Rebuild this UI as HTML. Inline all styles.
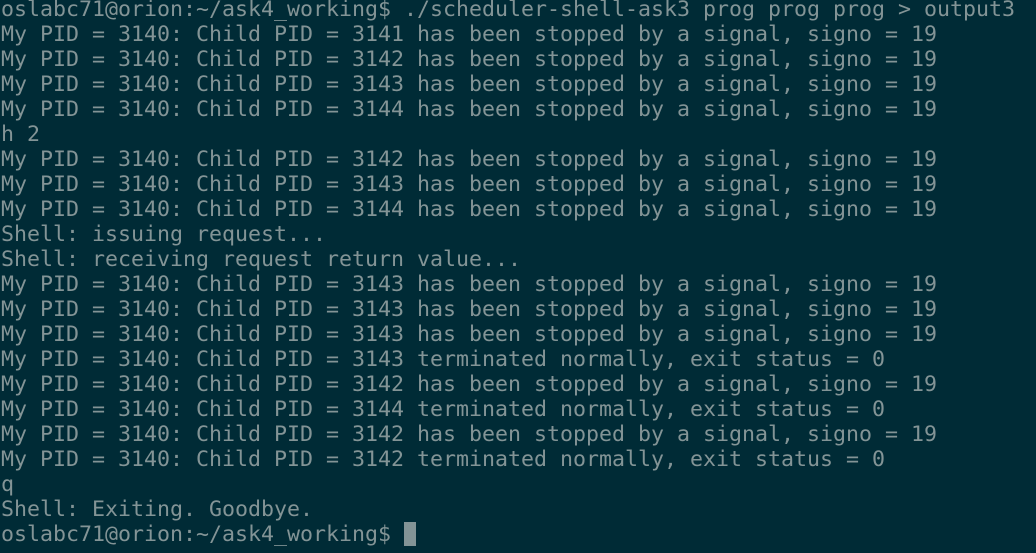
<!DOCTYPE html>
<html><head><style>
html,body{margin:0;padding:0;background:#002b36;width:1036px;height:553px;overflow:hidden}
pre{margin:0;position:absolute;left:1px;top:-3px;font-family:"DejaVu Sans Mono",monospace;font-size:21.6px;line-height:25px;color:#839496;white-space:pre}
.c{display:inline-block;width:12px;height:24px;background:#839496;vertical-align:top;margin-top:0px}
</style></head><body><pre>oslabc71@orion:~/ask4_working$ ./scheduler-shell-ask3 prog prog prog &gt; output3
My PID = 3140: Child PID = 3141 has been stopped by a signal, signo = 19
My PID = 3140: Child PID = 3142 has been stopped by a signal, signo = 19
My PID = 3140: Child PID = 3143 has been stopped by a signal, signo = 19
My PID = 3140: Child PID = 3144 has been stopped by a signal, signo = 19
h 2
My PID = 3140: Child PID = 3142 has been stopped by a signal, signo = 19
My PID = 3140: Child PID = 3143 has been stopped by a signal, signo = 19
My PID = 3140: Child PID = 3144 has been stopped by a signal, signo = 19
Shell: issuing request...
Shell: receiving request return value...
My PID = 3140: Child PID = 3143 has been stopped by a signal, signo = 19
My PID = 3140: Child PID = 3143 has been stopped by a signal, signo = 19
My PID = 3140: Child PID = 3143 has been stopped by a signal, signo = 19
My PID = 3140: Child PID = 3143 terminated normally, exit status = 0
My PID = 3140: Child PID = 3142 has been stopped by a signal, signo = 19
My PID = 3140: Child PID = 3144 terminated normally, exit status = 0
My PID = 3140: Child PID = 3142 has been stopped by a signal, signo = 19
My PID = 3140: Child PID = 3142 terminated normally, exit status = 0
q
Shell: Exiting. Goodbye.
oslabc71@orion:~/ask4_working$ <span class="c"></span></pre></body></html>
